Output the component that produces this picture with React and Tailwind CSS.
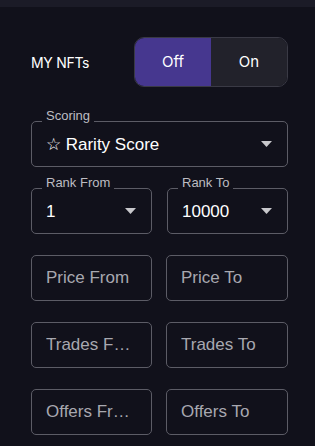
import React, { useState } from 'react';

function Caret() {
    return (
        <svg width="11" height="6" viewBox="0 0 11 6" className="shrink-0">
            <path d="M0 0 L11 0 L5.5 6 Z" fill="#c8c8cc" />
        </svg>
    );
}

function SelectBox({ label, value }) {
    return (
        <div className="relative h-[46px] rounded-[5px] border border-[#5c5c66] flex items-center justify-between pl-[14px] pr-[15px]">
            <span className="absolute -top-[14px] left-[10px] px-[4px] bg-[#11111b] text-[13px] leading-[16px] text-[#bdbdc2]">{label}</span>
            <span className="text-white text-[17px] pt-[1px]">{value}</span>
            <Caret />
        </div>
    );
}

function NumberBox({ placeholder }) {
    return (
        <input
            type="text"
            placeholder={placeholder}
            className="w-full min-w-0 h-[46px] rounded-[5px] border border-[#5c5c66] bg-transparent pl-[14px] pr-[16px] text-[17px] text-white placeholder:text-[#a8a8b0] outline-none text-ellipsis"
        />
    );
}

export default function App() {
    const [mine, setMine] = useState(false);

    return (
        <div className="w-[315px] h-[446px] bg-[#11111b] overflow-hidden" style={{ fontFamily: '"Liberation Sans", Arial, sans-serif' }}>
            <div className="h-[7px] bg-[#1b1b27]" />
            <div className="px-[31px] pr-[27px]">
                <div className="flex items-center justify-between mt-[30px]">
                    <span className="text-[14px] text-white font-['Inter',sans-serif] font-normal tracking-[-0.3px]">MY NFTs</span>
                    <div className="flex w-[154px] h-[50px] rounded-[10px] border border-[#3a3a45] overflow-hidden font-['Inter',sans-serif] text-[15px] font-normal">
                        <button onClick={() => setMine(false)} className={`flex-1 ${!mine ? 'bg-[#46378f] text-white' : 'bg-[#22222b] text-white'}`}>Off</button>
                        <button onClick={() => setMine(true)} className={`flex-1 ${mine ? 'bg-[#46378f] text-white' : 'bg-[#22222b] text-white'}`}>On</button>
                    </div>
                </div>
                <div className="mt-[34px] flex flex-col gap-[21px]">
                    <SelectBox label="Scoring" value="☆ Rarity Score" />
                    <div className="grid grid-cols-[121px_121px] justify-between">
                        <SelectBox label="Rank From" value="1" />
                        <SelectBox label="Rank To" value="10000" />
                    </div>
                    <div className="grid grid-cols-[121px_122px] justify-between">
                        <NumberBox placeholder="Price From" />
                        <NumberBox placeholder="Price To" />
                    </div>
                    <div className="grid grid-cols-[121px_122px] justify-between">
                        <NumberBox placeholder="Trades From" />
                        <NumberBox placeholder="Trades To" />
                    </div>
                    <div className="grid grid-cols-[121px_122px] justify-between">
                        <NumberBox placeholder="Offers From" />
                        <NumberBox placeholder="Offers To" />
                    </div>
                </div>
            </div>
        </div>
    );
}
